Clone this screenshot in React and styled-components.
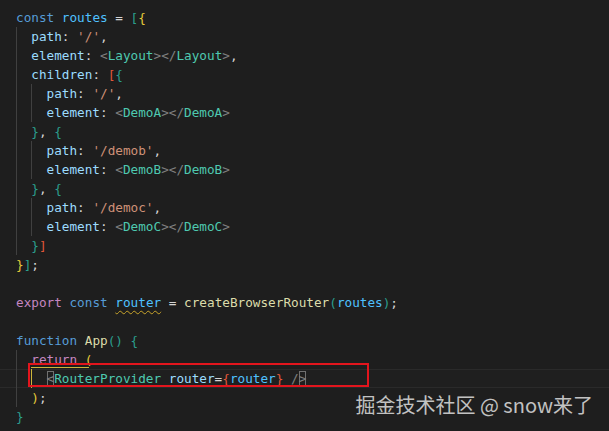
import React from 'react';
import styled, { createGlobalStyle } from 'styled-components';

const GlobalStyle = createGlobalStyle`
  html, body {
    margin: 0;
    padding: 0;
    background: #1e1e1e;
  }
  body {
    width: 609px;
    height: 431px;
    overflow: hidden;
  }
`;

const BRACKETS = ['#2b9e8e', '#e6cc3a', '#e2573a'];

const Editor = styled.div`
  position: relative;
  width: 609px;
  height: 431px;
  box-sizing: border-box;
  padding-top: 8px;
  background: #1e1e1e;
  color: #d4d4d4;
  font-family: "DejaVu Sans Mono", "Liberation Mono", monospace;
  font-size: 12.7px;
  overflow: hidden;
`;

const Line = styled.div`
  position: relative;
  height: 19px;
  line-height: 19px;
  padding-left: 16px;
  white-space: pre;
  ${p => p.$current && 'box-shadow: inset 0 1px 0 #2a2a2a, inset 0 -1px 0 #2a2a2a; background: #1f1f1f;'}
`;

const Indent = styled.span`
  display: inline-block;
  width: 2ch;
  height: 19px;
  vertical-align: top;
  box-sizing: border-box;
  border-left: 1px solid ${p => (p.$active ? '#cdb53a' : p.$guide ? '#404040' : 'transparent')};
`;

// horizontal part of the bracket pair guide under "return ("
const PairGuide = styled.span`
  position: absolute;
  left: calc(16px + 2ch);
  bottom: 1px;
  width: 7.6ch;
  height: 0;
  border-bottom: 1px solid #cdb53a;
`;

const Kw = styled.span`color: #569cd6;`;
const Ctrl = styled.span`color: #c586c0;`;
const Const = styled.span`color: #4fc1ff;`;
const Prop = styled.span`color: #9cdcfe;`;
const Str = styled.span`color: #ce9178;`;
const Punc = styled.span`color: #808080;`;
const Tag = styled.span`color: #4ec9b0;`;
const Fn = styled.span`color: #dcdcaa;`;
const Br = styled.span`color: ${p => BRACKETS[p.$level % 3]};`;

const Match = styled.span`
  color: #808080;
  box-shadow: inset 0 0 0 1px #707070;
`;

const Squiggle = styled(Const)`
  text-decoration-line: underline;
  text-decoration-style: wavy;
  text-decoration-color: #c8a42a;
  text-decoration-thickness: 1px;
  text-underline-offset: 3px;
`;

const RedBox = styled.div`
  position: absolute;
  left: 28px;
  top: 363px;
  width: 341px;
  height: 24px;
  box-sizing: border-box;
  border: 2px solid #e3151d;
  pointer-events: none;
`;

const Watermark = styled.div`
  position: absolute;
  right: 16px;
  top: 394px;
  font-family: "Noto Sans CJK SC", "Noto Sans", sans-serif;
  font-size: 20px;
  line-height: 22px;
  color: rgba(225, 225, 225, 0.85);
  white-space: pre;
`;

const El = ({ name }) => (
  <>
    <Punc>&lt;</Punc><Tag>{name}</Tag><Punc>&gt;&lt;/</Punc><Tag>{name}</Tag><Punc>&gt;</Punc>
  </>
);

const G = () => <Indent $guide />;

const Route = ({ path, el }) => (
  <>
    <Line><G /><G /><Prop>path</Prop>: <Str>'{path}'</Str>,</Line>
    <Line><G /><G /><Prop>element</Prop>: <El name={el} /></Line>
  </>
);

export default function App() {
  return (
    <Editor>
      <GlobalStyle />
      <Line><Kw>const</Kw> <Const>routes</Const> = <Br $level={0}>[</Br><Br $level={1}>{'{'}</Br></Line>
      <Line><G /><Prop>path</Prop>: <Str>'/'</Str>,</Line>
      <Line><G /><Prop>element</Prop>: <El name="Layout" />,</Line>
      <Line><G /><Prop>children</Prop>: <Br $level={2}>[</Br><Br $level={3}>{'{'}</Br></Line>
      <Route path="/" el="DemoA" />
      <Line><G /><Br $level={3}>{'}'}</Br>, <Br $level={3}>{'{'}</Br></Line>
      <Route path="/demob" el="DemoB" />
      <Line><G /><Br $level={3}>{'}'}</Br>, <Br $level={3}>{'{'}</Br></Line>
      <Route path="/democ" el="DemoC" />
      <Line><G /><Br $level={3}>{'}'}</Br><Br $level={2}>]</Br></Line>
      <Line><Br $level={1}>{'}'}</Br><Br $level={0}>]</Br>;</Line>
      <Line />
      <Line><Ctrl>export</Ctrl> <Kw>const</Kw> <Squiggle>router</Squiggle> = <Fn>createBrowserRouter</Fn><Br $level={0}>(</Br><Const>routes</Const><Br $level={0}>)</Br>;</Line>
      <Line />
      <Line><Kw>function</Kw> <Fn>App</Fn><Br $level={0}>()</Br> <Br $level={0}>{'{'}</Br></Line>
      <Line><G /><Ctrl>return</Ctrl> <Br $level={1}>(</Br><PairGuide /></Line>
      <Line $current><G /><Indent $active /><Match>&lt;</Match><Tag>RouterProvider</Tag> <Prop>router</Prop>=<Br $level={2}>{'{'}</Br><Const>router</Const><Br $level={2}>{'}'}</Br> <Punc>/</Punc><Match>&gt;</Match></Line>
      <Line><G /><Br $level={1}>)</Br>;</Line>
      <Line><Br $level={0}>{'}'}</Br></Line>
      <RedBox />
      <Watermark>掘金技术社区 @ snow来了</Watermark>
    </Editor>
  );
}
